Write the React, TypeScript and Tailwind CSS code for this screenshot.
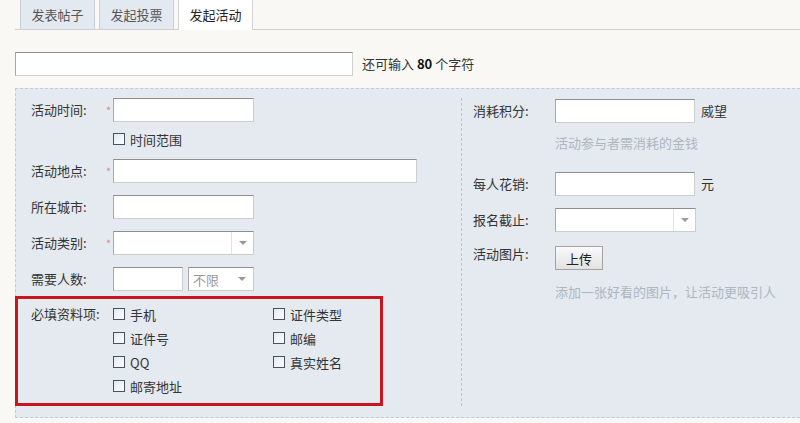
import React from "react";

const font = { fontFamily: '"Noto Sans CJK SC", "Noto Sans", sans-serif' };

function TextBox({ w }: { w: string }) {
  return (
    <div
      className={`${w} h-[24px] bg-white border border-[#cdcdcd] border-t-[#8e8e8e] border-l-[#a9a9a9]`}
    />
  );
}

function Select({ w, text, divider }: { w: string; text?: string; divider?: boolean }) {
  return (
    <div
      className={`${w} h-[24px] bg-white border border-[#cdcdcd] border-t-[#8e8e8e] border-l-[#a9a9a9] flex items-center`}
    >
      <span className="flex-1 pl-[4px] text-[13px] text-[#999] leading-none">{text}</span>
      <span
        className={`w-[22px] h-full flex items-center justify-center ${divider ? "border-l border-[#e2e2e2]" : ""}`}
      >
        <span className="block w-0 h-0 border-l-[4px] border-r-[4px] border-t-[4px] border-l-transparent border-r-transparent border-t-[#9a9a9a]" />
      </span>
    </div>
  );
}

function Check({ label }: { label: string }) {
  return (
    <label className="flex items-center gap-[5px] text-[13px] text-[#333] leading-none">
      <span className="block w-[12px] h-[12px] border border-[#46525f] bg-gradient-to-br from-[#e2e9f0] to-white" />
      {label}
    </label>
  );
}

function Label({ text, w = "w-[75px]", req }: { text: string; w?: string; req?: boolean }) {
  return (
    <>
      <span className={`${w} shrink-0 text-[13px] text-[#333] leading-[16px]`}>{text}</span>
      <span className="w-[7px] shrink-0 text-[11px] leading-none text-[#e08888]">
        {req ? "*" : ""}
      </span>
    </>
  );
}

const tabs = ["发表帖子", "发起投票", "发起活动"];

export default function App() {
  return (
    <div className="w-[800px] h-[423px] overflow-hidden bg-[#f9f8f4]" style={font}>
      {/* tabs */}
      <div className="ml-[15px] h-[30px] border-b border-[#cfcfcf] flex items-end gap-[4px] pl-[5px]">
        {tabs.map((t, i) => (
          <div
            key={t}
            className={`w-[75px] h-[30px] -mb-px flex items-center justify-center text-[13px] border-x ${
              i === 2
                ? "bg-white border-[#d4d4d4] text-[#222]"
                : "bg-[#e3e9f0] border-[#c9cfd6] border-b border-b-[#cfcfcf] text-[#555]"
            }`}
          >
            {t}
          </div>
        ))}
      </div>

      {/* subject */}
      <div className="ml-[15px] mt-[22px] flex items-center">
        <div className="w-[338px] h-[24px] bg-white border border-[#d0d0d0] border-t-[#8e8e8e] border-l-[#a5a5a5]" />
        <span className="ml-[9px] text-[13px] text-[#333]">
          还可输入 <b className="font-bold text-[#111]">80</b> 个字符
        </span>
      </div>

      {/* panel */}
      <div className="ml-[15px] mt-[12px] w-[785px] bg-[#e4eaf0] border border-dashed border-[#c2ccd6] border-r-0 flex">
        {/* left column */}
        <div className="w-[445px] pt-[9px] pb-[11px]">
          <div className="flex items-center pl-[15px]">
            <Label text="活动时间:" req />
            <TextBox w="w-[141px]" />
          </div>
          <div className="pl-[97px] mt-[9px] h-[16px] flex items-center">
            <Check label="时间范围" />
          </div>
          <div className="flex items-center pl-[15px] mt-[12px]">
            <Label text="活动地点:" req />
            <TextBox w="w-[304px]" />
          </div>
          <div className="flex items-center pl-[15px] mt-[12px]">
            <Label text="所在城市:" />
            <TextBox w="w-[141px]" />
          </div>
          <div className="flex items-center pl-[15px] mt-[12px]">
            <Label text="活动类别:" req />
            <Select w="w-[141px]" divider />
          </div>
          <div className="flex items-center pl-[15px] mt-[12px]">
            <Label text="需要人数:" />
            <TextBox w="w-[70px]" />
            <div className="ml-[5px]">
              <Select w="w-[66px]" text="不限" />
            </div>
          </div>

          {/* required fields box */}
          <div className="-ml-px mt-[5px] w-[368px] h-[110px] border-[3px] border-[#c8161e] pl-[13px] pt-[3px] flex">
            <span className="w-[82px] shrink-0 text-[13px] text-[#333] leading-[24px]">必填资料项:</span>
            <div className="grid grid-cols-[160px_1fr] auto-rows-[24px] items-center">
              <Check label="手机" />
              <Check label="证件类型" />
              <Check label="证件号" />
              <Check label="邮编" />
              <Check label="QQ" />
              <Check label="真实姓名" />
              <Check label="邮寄地址" />
            </div>
          </div>
        </div>

        {/* right column */}
        <div className="flex-1 mt-[9px] mb-[11px] border-l border-dashed border-[#b9c2cb] pl-[11px] pt-[1px]">
          <div className="flex items-center">
            <span className="w-[82px] text-[13px] text-[#333]">消耗积分:</span>
            <TextBox w="w-[140px]" />
            <span className="ml-[6px] text-[13px] text-[#333]">威望</span>
          </div>
          <div className="ml-[82px] mt-[12px] text-[13px] leading-[16px] text-[#aeb6be]">活动参与者需消耗的金钱</div>
          <div className="flex items-center mt-[21px]">
            <span className="w-[82px] text-[13px] text-[#333]">每人花销:</span>
            <TextBox w="w-[140px]" />
            <span className="ml-[6px] text-[13px] text-[#333]">元</span>
          </div>
          <div className="flex items-center mt-[12px]">
            <span className="w-[82px] text-[13px] text-[#333]">报名截止:</span>
            <Select w="w-[141px]" divider />
          </div>
          <div className="flex items-start mt-[14px]">
            <span className="w-[82px] text-[13px] leading-[16px] text-[#333]">活动图片:</span>
            <button className="w-[48px] h-[24px] border border-[#a3a3a3] bg-gradient-to-b from-[#fafafa] to-[#e2e2e2] text-[13px] text-[#222] leading-none">
              上传
            </button>
          </div>
          <div className="ml-[82px] mt-[14px] text-[13px] leading-[16px] text-[#aeb6be]">
            添加一张好看的图片，让活动更吸引人
          </div>
        </div>
      </div>
    </div>
  );
}
